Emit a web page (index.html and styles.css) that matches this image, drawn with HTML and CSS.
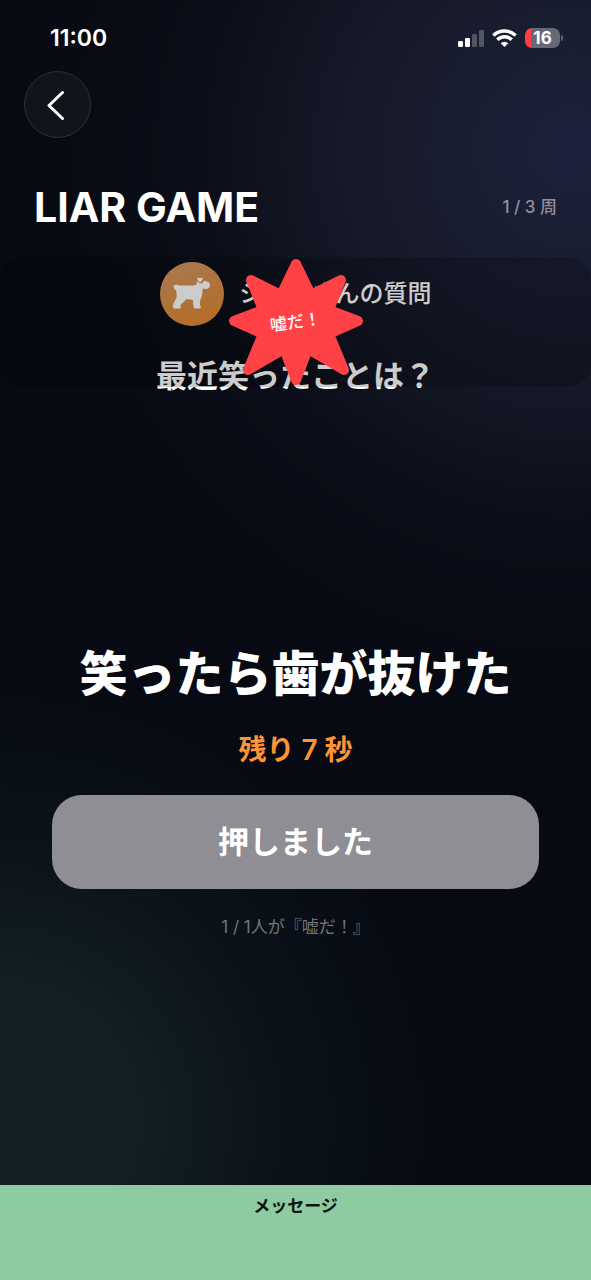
FILE: index.html
```html
<!DOCTYPE html>
<html lang="ja">
<head>
<meta charset="utf-8">
<meta name="viewport" content="width=device-width, initial-scale=1">
<title>LIAR GAME</title>
<link rel="stylesheet" href="styles.css">
</head>
<body>
<div class="app">
  <div class="status">
    <time class="clock">11:00</time>
    <div class="indicators">
      <svg width="26" height="18" viewBox="0 0 26 18" aria-hidden="true">
        <rect x="0" y="12" width="5" height="6" rx="1.3" fill="#fff"/>
        <rect x="7" y="9" width="5" height="9" rx="1.3" fill="#fff"/>
        <rect x="14" y="5" width="5" height="13" rx="1.3" fill="#fff" opacity=".25"/>
        <rect x="21" y="1" width="5" height="17" rx="1.3" fill="#fff" opacity=".25"/>
      </svg>
      <svg width="25" height="18" viewBox="0 0 25 18" fill="none" stroke="#fff" stroke-width="3.5" aria-hidden="true">
        <path d="M1.4 6.6A15.7 15.7 0 0 1 23.6 6.6"/>
        <path d="M5.3 10.8A9.9 9.9 0 0 1 19.700 10.8"/>
        <path d="M12.500 18L8.700 14.200A5.400 5.400 0 0 1 16.300 14.200Z" fill="#fff" stroke="none"/>
      </svg>
      <div class="battery"><span class="level">16</span><span class="nub"></span></div>
    </div>
  </div>

  <button class="back" type="button" aria-label="戻る">
    <svg width="18" height="30" viewBox="0 0 18 30" fill="none" stroke="#fff" stroke-width="3" stroke-linecap="round" stroke-linejoin="round" aria-hidden="true"><path d="M15.500 2.500L2 15.500L15.500 28.500"/></svg>
  </button>

  <header class="header">
    <h1 class="title">LIAR GAME</h1>
    <span class="round">1 / 3 周</span>
  </header>

  <section class="stage">
    <div class="question">
      <div class="asker">
        <span class="avatar">
          <svg width="40" height="36" viewBox="0 0 40 36" fill="#fff" aria-hidden="true">
            <path d="M2.300 9.200C1 9.600 1.200 12.200 3 13.400C4 14.200 4.500 15 4.500 16.500L4.700 21C4.400 23.500 1.800 25.500 1.300 28.500C1 30.500.2 32.300 2.800 32.400H7.400C9.200 32.400 9.500 30.600 8.200 29.400C9.200 27.500 12.300 26.300 13.800 23.500C16.500 23 19 23.600 20.800 24.100L21.600 30.500C21.500 32 22.200 32.500 23.500 32.500H27.200C29.300 32.500 29.500 30.400 28 29.200C27.800 26.500 28.200 24.400 28.800 22.500C30.500 19.500 30.500 16.500 30.600 12.600C33.500 13.500 36.800 13.200 37.700 10.500C38.600 8.500 37.300 5.600 35 5.800L32.200 4.400L30.300 7.500C28 8 26.200 5.500 24.700 5.600L24.500 8.500C22 9.900 19 9.500 16.500 9.400H7.500C5.500 9.400 4.300 8.300 2.300 9.200Z"/>
            <path d="M25.100 1.600C24 1.900 24.700 3.200 25.700 4.600C26.500 6.200 28 7 29.200 6C30.500 5 31.300 3.200 31.600 1.800C29.500 1 27.200 1.300 25.100 1.600Z" stroke="#d39150" stroke-width="1"/>
          </svg>
        </span>
        <span class="asker-name">ジョンさんの質問</span>
      </div>
      <p class="question-text">最近笑ったことは？</p>
    </div>
    <div class="shade"></div>
    <div class="burst">
      <svg class="burst-shape" width="136" height="130" viewBox="-68 -65 136 130" aria-hidden="true">
        <path d="M0-58L15-27L45-42L33-12L62-1L33 12L48 48L12 27L0 58L-12 27L-48 48L-33 12L-62-1L-33-12L-45-42L-15-27Z" fill="#ff4245" stroke="#ff4245" stroke-width="10" stroke-linejoin="round"/>
      </svg>
      <span class="burst-text">嘘だ！</span>
    </div>
  </section>

  <main class="answer">
    <h2 class="answer-text">笑ったら歯が抜けた</h2>
    <p class="timer">残り 7 秒</p>
    <button class="press" type="button">押しました</button>
    <p class="votes">1 / 1人が『嘘だ！』</p>
  </main>

  <footer class="message">メッセージ</footer>
</div>
</body>
</html>
```
FILE: styles.css
```css
* { box-sizing: border-box; }

body {
  margin: 0;
  background: #070a12;
  color: #fff;
  font-family: Inter, "Noto Sans CJK JP", sans-serif;
}

h1, h2, p { margin: 0; }

.app {
  display: flex;
  flex-direction: column;
  min-height: 100vh;
  background:
    radial-gradient(circle 540px at 97% 150px, #1d203b 0, #1a1e32 100px, #131725 260px, #0b0e18 380px, transparent 540px),
    radial-gradient(circle 440px at 0 1120px, #132125 0, #121f24 130px, #0b131a 280px, transparent 440px);
}

.status {
  display: flex;
  align-items: center;
  justify-content: space-between;
  height: 71px;
  padding: 4px 28px 0 50px;
}

.clock {
  font-size: 23px;
  line-height: 28px;
  font-weight: 600;
}

.indicators {
  display: flex;
  align-items: center;
  gap: 8px;
}

.battery {
  display: flex;
  align-items: center;
  gap: 1px;
}

.level {
  width: 35px;
  height: 20px;
  border-radius: 7px;
  background: linear-gradient(90deg, #ff3b45 6px, #666875 6px);
  font-size: 17px;
  line-height: 20px;
  font-weight: 700;
  text-align: center;
}

.nub {
  width: 2px;
  height: 6px;
  border-radius: 0 2px 2px 0;
  background: #5d5f6d;
}

.back {
  display: flex;
  align-items: center;
  justify-content: center;
  width: 67px;
  height: 67px;
  margin-left: 24px;
  padding: 0 4px 0 0;
  border: 1px solid #2d303b;
  border-radius: 50%;
  background: #11141b;
}

.header {
  display: flex;
  align-items: center;
  justify-content: space-between;
  height: 119px;
  padding: 18px 34px 0;
}

.title {
  font-size: 41px;
  line-height: 50px;
  font-weight: 700;
}

.round {
  font-size: 17px;
  line-height: 24px;
  font-weight: 500;
  color: #8f909d;
}

.stage {
  position: relative;
  height: 130px;
}

.question {
  display: flex;
  flex-direction: column;
  align-items: center;
  gap: 28px;
  padding-top: 5px;
}

.asker {
  display: flex;
  align-items: center;
  gap: 16px;
}

.avatar {
  display: flex;
  align-items: center;
  justify-content: center;
  width: 64px;
  height: 64px;
  border-radius: 50%;
  background: linear-gradient(160deg, #d39969, #e5862b);
}

.asker-name {
  font-size: 24px;
  line-height: 32px;
  font-weight: 500;
}

.question-text {
  font-size: 31px;
  line-height: 44px;
  font-weight: 600;
}

.shade {
  position: absolute;
  inset: 0;
  border-radius: 24px;
  background: rgba(0, 0, 0, .2);
}

.burst {
  position: absolute;
  inset: 0;
  display: grid;
  place-items: center;
}

.burst-shape, .burst-text { grid-area: 1 / 1; }

.burst-text {
  font-size: 17px;
  line-height: 24px;
  font-weight: 500;
  transform: rotate(-8deg);
}

.answer {
  flex: 1;
  display: flex;
  flex-direction: column;
  align-items: center;
  padding: 252px 52px 40px;
}

.answer-text {
  font-size: 48px;
  line-height: 70px;
  font-weight: 900;
}

.timer {
  margin-top: 20px;
  font-size: 28px;
  line-height: 42px;
  font-weight: 600;
  color: #fd9435;
}

.press {
  width: 100%;
  height: 94px;
  margin-top: 24px;
  padding: 0;
  border: 0;
  border-radius: 30px;
  background: #8f8e94;
  color: #fff;
  font: inherit;
  font-size: 31px;
  line-height: 44px;
  font-weight: 700;
}

.votes {
  margin-top: 26px;
  font-size: 17px;
  line-height: 24px;
  color: #72757b;
}

.message {
  height: 95px;
  padding-top: 9px;
  background: #8fcba1;
  color: #0c130f;
  font-size: 17px;
  line-height: 24px;
  font-weight: 700;
  text-align: center;
}
```
